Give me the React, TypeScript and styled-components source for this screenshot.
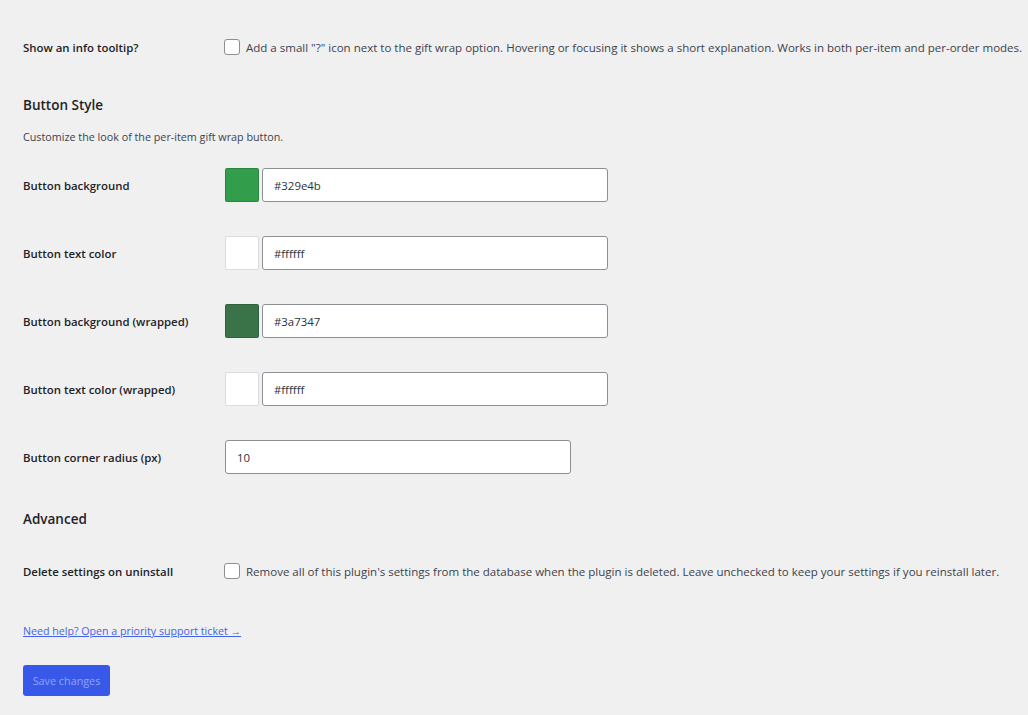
import React from "react";
import styled, { createGlobalStyle } from "styled-components";

const Global = createGlobalStyle`
  html, body { margin: 0; padding: 0; background: #f0f0f1; }
  body {
    font-family: "Open Sans", "Noto Sans", sans-serif;
    font-size: 11.5px;
    color: #3c434a;
  }
`;

const Page = styled.div`
  padding: 13px 0 20px 23px;
  display: flex;
  flex-direction: column;
  align-items: flex-start;
`;

const Row = styled.div<{ $top?: number }>`
  display: flex;
  align-items: center;
  height: 68px;
  margin-top: ${(p) => p.$top ?? 0}px;
`;

const Label = styled.div`
  width: 202px;
  flex: none;
  font-weight: 600;
  font-size: 11.4px;
  color: #1d2327;
`;

const Field = styled.div`
  display: flex;
  align-items: center;
  gap: 3px;
`;

const CheckLabel = styled.label`
  display: flex;
  align-items: center;
  gap: 6px;
  font-size: 11.52px;
  color: #3c434a;
  white-space: nowrap;
`;

const Check = styled.span`
  width: 14px;
  height: 14px;
  border: 1px solid #8c8f94;
  border-radius: 3px;
  background: #fff;
  margin-left: -1px;
  flex: none;
`;

const SectionTitle = styled.h2<{ $top: number }>`
  margin: ${(p) => p.$top}px 0 0;
  font-size: 13.5px;
  line-height: 24px;
  font-weight: 600;
  color: #1d2327;
`;

const Description = styled.p`
  margin: 11px 0 5px;
  font-size: 10.75px;
  line-height: 18px;
  color: #3c434a;
`;

const Swatch = styled.span<{ $color: string }>`
  width: 32px;
  height: 32px;
  background: ${(p) => p.$color};
  border: 1px solid ${(p) => (p.$color === "#ffffff" ? "#dcdcde" : "rgba(0,0,0,0.15)")};
  border-radius: 2px;
  flex: none;
`;

const TextInput = styled.div<{ $width: number }>`
  box-sizing: border-box;
  width: ${(p) => p.$width}px;
  height: 34px;
  background: #fff;
  border: 1px solid #8c8f94;
  border-radius: 3px;
  padding: 0 11px;
  display: flex;
  align-items: center;
  font-size: 11.4px;
  color: #2c3338;
`;

const HelpLink = styled.a`
  margin-top: 17px;
  font-size: 10.65px;
  line-height: 18px;
  color: #4562e6;
  text-decoration: underline;
`;

const SaveButton = styled.button`
  margin-top: 25px;
  width: 87px;
  height: 31px;
  border: none;
  border-radius: 3px;
  background: #3858e9;
  color: #93a5f2;
  font-family: inherit;
  font-size: 10.8px;
  padding: 0;
`;

const colors = [
  { label: "Button background", value: "#329e4b" },
  { label: "Button text color", value: "#ffffff" },
  { label: "Button background (wrapped)", value: "#3a7347" },
  { label: "Button text color (wrapped)", value: "#ffffff" },
];

export default function App() {
  return (
    <>
      <Global />
      <Page>
        <Row>
          <Label>Show an info tooltip?</Label>
          <CheckLabel>
            <Check />
            Add a small "?" icon next to the gift wrap option. Hovering or focusing it shows a short explanation. Works in both per-item and per-order modes.
          </CheckLabel>
        </Row>

        <SectionTitle $top={12}>Button Style</SectionTitle>
        <Description>Customize the look of the per-item gift wrap button.</Description>

        {colors.map((c) => (
          <Row key={c.label}>
            <Label>{c.label}</Label>
            <Field>
              <Swatch $color={c.value} />
              <TextInput $width={346}>{c.value}</TextInput>
            </Field>
          </Row>
        ))}

        <Row>
          <Label>Button corner radius (px)</Label>
          <TextInput $width={346}>10</TextInput>
        </Row>

        <SectionTitle $top={16}>Advanced</SectionTitle>

        <Row $top={6}>
          <Label>Delete settings on uninstall</Label>
          <CheckLabel>
            <Check />
            Remove all of this plugin's settings from the database when the plugin is deleted. Leave unchecked to keep your settings if you reinstall later.
          </CheckLabel>
        </Row>

        <HelpLink href="#">Need help? Open a priority support ticket →</HelpLink>
        <SaveButton>Save changes</SaveButton>
      </Page>
    </>
  );
}
